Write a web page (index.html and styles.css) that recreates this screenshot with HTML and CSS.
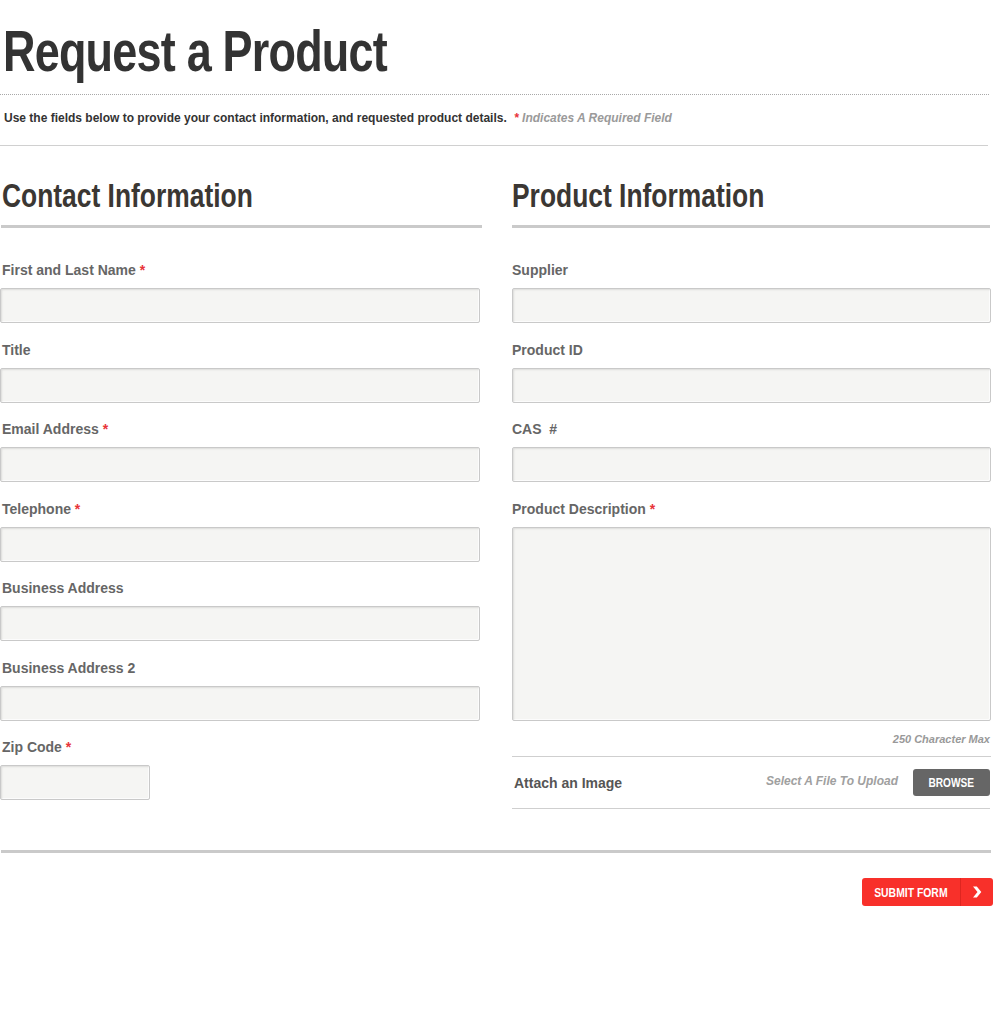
FILE: index.html
```html
<!DOCTYPE html>
<html>
<head>
<meta charset="utf-8">
<link rel="stylesheet" href="styles.css">
</head>
<body>
<div class="page">
  <div class="title-wrap"><h1 class="title">Request a Product</h1></div>
  <div class="intro">
    <span class="intro-text">Use the fields below to provide your contact information, and requested product details.</span>
    <span class="req-note"><span class="star">*</span> Indicates A Required Field</span>
  </div>
  <div class="columns">
    <section class="col col-left">
      <div class="col-head"><h2 class="col-title">Contact Information</h2></div>
      <div class="field"><label class="lbl">First and Last Name <span class="star">*</span></label><div class="input"></div></div>
      <div class="field"><label class="lbl">Title</label><div class="input"></div></div>
      <div class="field"><label class="lbl">Email Address <span class="star">*</span></label><div class="input"></div></div>
      <div class="field"><label class="lbl">Telephone <span class="star">*</span></label><div class="input"></div></div>
      <div class="field"><label class="lbl">Business Address</label><div class="input"></div></div>
      <div class="field"><label class="lbl">Business Address 2</label><div class="input"></div></div>
      <div class="field field-last"><label class="lbl">Zip Code <span class="star">*</span></label><div class="input input-zip"></div></div>
    </section>
    <section class="col col-right">
      <div class="col-head"><h2 class="col-title">Product Information</h2></div>
      <div class="field"><label class="lbl">Supplier</label><div class="input"></div></div>
      <div class="field"><label class="lbl">Product ID</label><div class="input"></div></div>
      <div class="field"><label class="lbl">CAS&nbsp; #</label><div class="input"></div></div>
      <div class="field field-last"><label class="lbl">Product Description <span class="star">*</span></label><div class="input textarea"></div></div>
      <div class="char-max">250 Character Max</div>
      <div class="attach">
        <span class="attach-label">Attach an Image</span>
        <span class="attach-right">
          <span class="file-note">Select A File To Upload</span>
          <span class="browse"><span class="narrow">BROWSE</span></span>
        </span>
      </div>
    </section>
  </div>
  <div class="bottom-rule"></div>
  <div class="submit-row">
    <span class="submit"><span class="submit-text"><span class="narrow">SUBMIT FORM</span></span><span class="submit-arrow"><svg width="10" height="12" viewBox="0 0 10 12"><path d="M1 0.5 L4.8 0.5 L9.3 6 L4.8 11.5 L1 11.5 L5.5 6 Z" fill="#fff"/></svg></span></span>
  </div>
</div>
</body>
</html>
```
FILE: styles.css
```css
html, body {
  margin: 0;
  padding: 0;
  background: #fff;
}
body {
  font-family: "Liberation Sans", Arial, sans-serif;
}
.page {
  width: 993px;
}
.title-wrap {
  padding: 21px 0 0 3px;
  height: 73px;
  border-bottom: 1px dotted #a8a8a8;
  width: 986px;
}
.title {
  display: inline-block;
  margin: 0;
  font-family: "Liberation Sans", sans-serif;
  font-weight: bold;
  font-size: 58px;
  line-height: 60px;
  color: #333;
  letter-spacing: -1px;
  transform: scaleX(0.775);
  transform-origin: 0 0;
  white-space: nowrap;
}
.intro {
  padding: 0 0 0 4px;
  height: 50px;
  line-height: 47px;
  font-size: 12px;
  border-bottom: 1px solid #d0d0d0;
  width: 984px;
}
.intro-text {
  font-weight: bold;
  color: #333;
}
.req-note {
  margin-left: 4px;
  font-style: italic;
  font-weight: bold;
  color: #9a9a9a;
}
.star {
  color: #e8333a;
  font-style: normal;
}
.req-note .star {
  font-style: italic;
}
.columns {
  display: grid;
  grid-template-columns: 482px 479px;
  column-gap: 30px;
  align-items: start;
}
.col-head {
  padding-top: 30px;
  height: 49px;
  border-bottom: 3px solid #cacaca;
  margin-left: 1px;
  padding-left: 1px;
  margin-bottom: 34px;
}
.col-right .col-head {
  margin-left: 0;
  padding-left: 0;
  margin-right: 1px;
}
.col-title {
  display: inline-block;
  margin: 0;
  line-height: 40px;
  font-family: "Liberation Sans", sans-serif;
  font-weight: bold;
  font-size: 33px;
  color: #3b3733;
  transform: scaleX(0.80);
  transform-origin: 0 0;
  white-space: nowrap;
}
.field {
  display: flex;
  flex-direction: column;
  margin-bottom: 18.5px;
}
.lbl {
  display: block;
  height: 16px;
  line-height: 16px;
  font-size: 14px;
  font-weight: bold;
  color: #666;
  padding-left: 2px;
  margin-bottom: 10px;
}
.col-right .lbl {
  padding-left: 0;
}
.input {
  box-sizing: border-box;
  height: 35px;
  width: 480px;
  background: #f5f5f3;
  border: 1px solid #c9c9c9;
  border-radius: 2px;
  box-shadow: inset 1px 1px 2px rgba(0,0,0,0.10), inset -1px -1px 0 rgba(255,255,255,0.8);
}
.col-right .input {
  width: 479px;
}
.input-zip {
  width: 150px;
}
.field-last {
  margin-bottom: 0;
}
.textarea {
  height: 194px;
}
.char-max {
  text-align: right;
  font-size: 11px;
  font-style: italic;
  font-weight: bold;
  color: #999;
  line-height: 14px;
  margin-top: 11px;
  padding-right: 1px;
  padding-bottom: 10px;
  border-bottom: 1px solid #cfcfcf;
}
.attach {
  display: flex;
  align-items: center;
  justify-content: space-between;
  height: 51px;
  border-bottom: 1px solid #cfcfcf;
  margin-right: 1px;
}
.attach-label {
  font-size: 14px;
  font-weight: bold;
  color: #555;
  padding-left: 2px;
  padding-top: 2px;
}
.attach-right {
  display: flex;
  align-items: center;
}
.file-note {
  font-size: 12px;
  font-style: italic;
  font-weight: bold;
  color: #a0a0a0;
  margin-right: 15px;
  margin-top: -2px;
}
.narrow {
  display: inline-block;
  transform: scaleX(0.78);
  white-space: nowrap;
}
.browse {
  display: inline-flex;
  justify-content: center;
  width: 77px;
  height: 27px;
  line-height: 28px;
  background: #666;
  border-radius: 3px;
  color: #fff;
  font-weight: bold;
  font-size: 13px;
}
.bottom-rule {
  margin-top: 41px;
  margin-left: 1px;
  width: 990px;
  height: 3px;
  background: #cacaca;
}
.submit-row {
  display: flex;
  justify-content: flex-end;
  padding-top: 25px;
}
.submit {
  display: flex;
  height: 28px;
  width: 131px;
  background: #f8302a;
  border-radius: 3px;
  color: #fff;
  font-weight: bold;
  font-size: 13px;
  line-height: 29px;
}
.submit-text {
  flex: 1;
  display: flex;
  justify-content: center;
  border-right: 1px solid #de2620;
}
.submit-text .narrow {
  transform: scaleX(0.8);
}
.submit-arrow {
  width: 32px;
  display: flex;
  align-items: center;
  justify-content: center;
}
```
